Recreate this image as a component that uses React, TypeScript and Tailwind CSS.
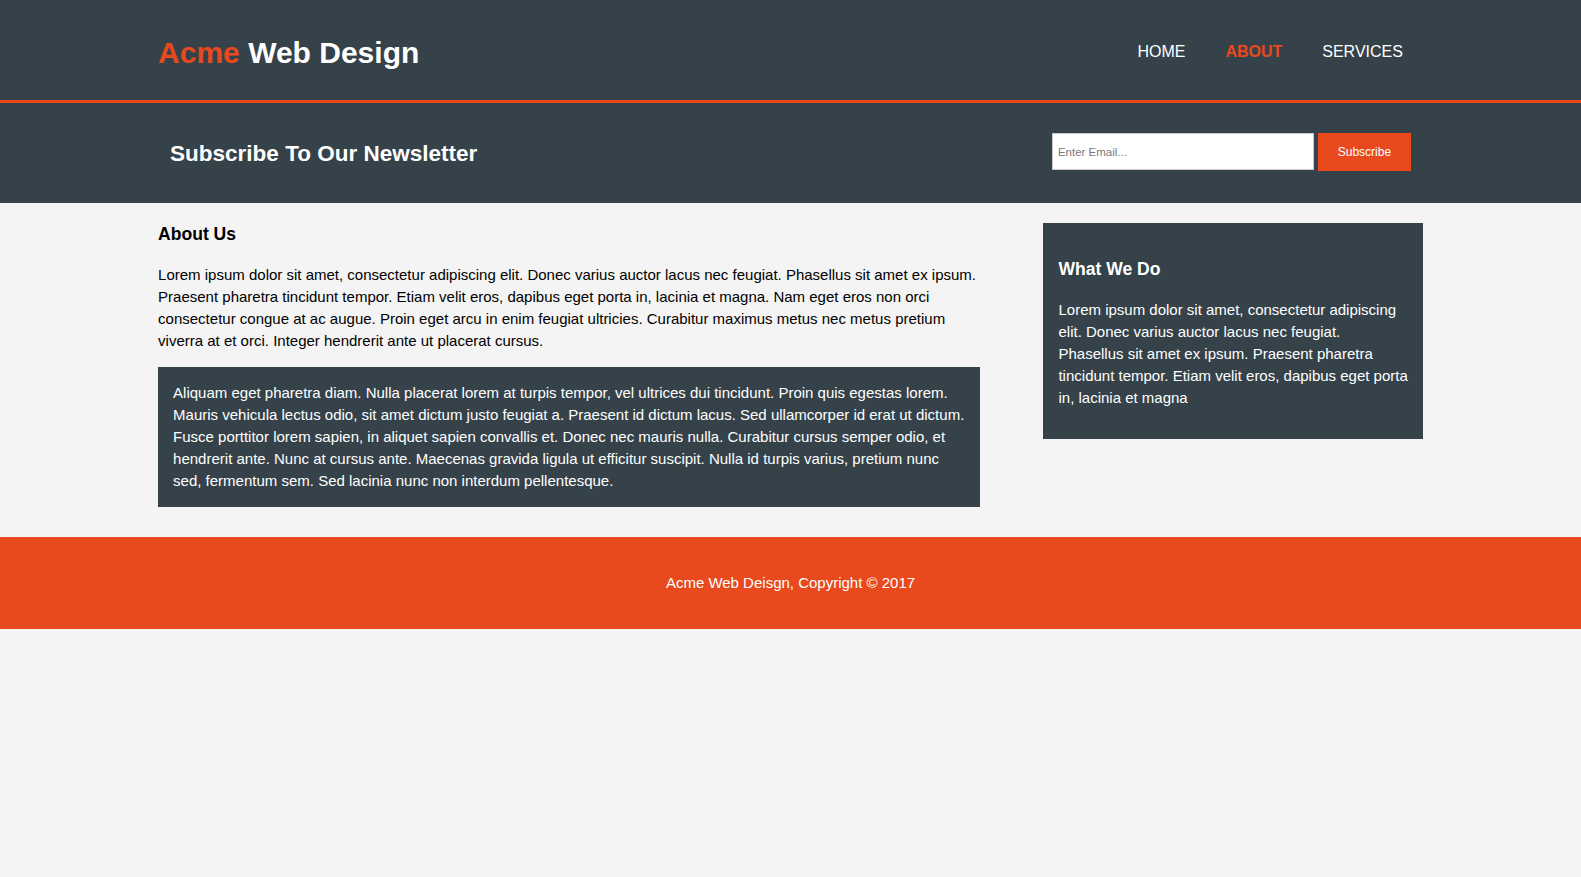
import React from "react"

const NAV = [
  { label: "Home", current: false },
  { label: "About", current: true },
  { label: "Services", current: false },
]

export default function App() {
  return (
    <div className="min-h-screen bg-[#f4f4f4] font-['Liberation_Sans',Arial,sans-serif] text-[15px] leading-[22px] text-black">
      {/* Header */}
      <header className="h-[103px] border-b-[3px] border-[#e8491d] bg-[#35424a] pt-[30px] text-white">
        <div className="mx-auto flex w-[80%] items-start justify-between">
          <h1 className="text-[30px] font-bold leading-[45px]">
            <span className="text-[#e8491d]">Acme</span> Web Design
          </h1>
          <nav className="mt-[11px]">
            <ul className="flex">
              {NAV.map((item) => (
                <li key={item.label} className="px-5 text-[16px] leading-[22px] uppercase">
                  <a
                    href="#"
                    className={item.current ? "font-bold text-[#e8491d]" : "text-white"}
                  >
                    {item.label}
                  </a>
                </li>
              ))}
            </ul>
          </nav>
        </div>
      </header>

      {/* Newsletter */}
      <section className="h-[100px] bg-[#35424a] text-white">
        <div className="mx-auto flex w-[80%] items-start justify-between px-3">
          <h1 className="mt-[34px] text-[22.5px] font-bold leading-[34px]">
            Subscribe To Our Newsletter
          </h1>
          <form className="mt-[30px] flex items-start gap-1" onSubmit={(e) => e.preventDefault()}>
            <input
              type="email"
              placeholder="Enter Email..."
              className="h-[37px] w-[262px] border border-[#c9c9c9] bg-white pl-[5px] text-[11.5px] text-black outline-none placeholder:text-[#7a7a7a]"
            />
            <button
              type="submit"
              className="h-[38px] w-[93px] bg-[#e8491d] text-[12px] font-medium text-white"
            >
              Subscribe
            </button>
          </form>
        </div>
      </section>

      {/* Main */}
      <section className="mx-auto flex w-[80%] items-start justify-between">
        <article className="w-[65%]">
          <h1 className="mb-[17.5px] mt-[17.5px] text-[17.55px] font-bold leading-[26px]">About Us</h1>
          <p>
            Lorem ipsum dolor sit amet, consectetur adipiscing elit. Donec varius auctor lacus nec
            feugiat. Phasellus sit amet ex ipsum. Praesent pharetra tincidunt tempor. Etiam velit
            eros, dapibus eget porta in, lacinia et magna. Nam eget eros non orci consectetur congue
            at ac augue. Proin eget arcu in enim feugiat ultricies. Curabitur maximus metus nec metus
            pretium viverra at et orci. Integer hendrerit ante ut placerat cursus.
          </p>
          <p className="mb-[10px] mt-[15px] bg-[#35424a] p-[15px] text-white">
            Aliquam eget pharetra diam. Nulla placerat lorem at turpis tempor, vel ultrices dui
            tincidunt. Proin quis egestas lorem. Mauris vehicula lectus odio, sit amet dictum justo
            feugiat a. Praesent id dictum lacus. Sed ullamcorper id erat ut dictum. Fusce porttitor
            lorem sapien, in aliquet sapien convallis et. Donec nec mauris nulla. Curabitur cursus
            semper odio, et hendrerit ante. Nunc at cursus ante. Maecenas gravida ligula ut efficitur
            suscipit. Nulla id turpis varius, pretium nunc sed, fermentum sem. Sed lacinia nunc non
            interdum pellentesque.
          </p>
        </article>

        <aside className="mt-[20px] w-[30%]">
          <div className="bg-[#35424a] p-[15px] text-white">
            <h3 className="mb-[17.5px] mt-[17.5px] text-[17.55px] font-bold leading-[26px]">What We Do</h3>
            <p className="mb-[15px]">
              Lorem ipsum dolor sit amet, consectetur adipiscing elit. Donec varius auctor lacus nec
              feugiat. Phasellus sit amet ex ipsum. Praesent pharetra tincidunt tempor. Etiam velit
              eros, dapibus eget porta in, lacinia et magna
            </p>
          </div>
        </aside>
      </section>

      {/* Footer */}
      <footer className="mt-[20px] bg-[#e8491d] py-[35px] text-center text-white">
        <p>Acme Web Deisgn, Copyright &copy; 2017</p>
      </footer>
    </div>
  )
}
